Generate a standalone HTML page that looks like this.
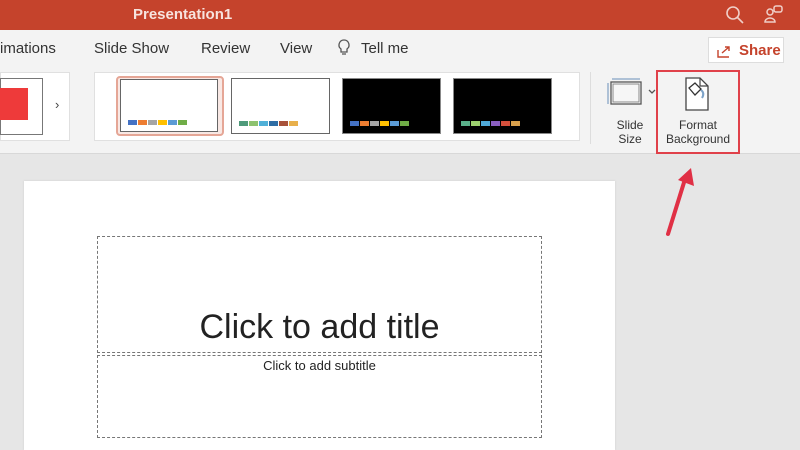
<!DOCTYPE html>
<html><head><style>
body{margin:0;width:800px;height:450px;overflow:hidden;background:#e6e6e6;font-family:"Liberation Sans",sans-serif;position:relative}
.a{position:absolute}
.sw{display:inline-block;width:9px;height:5px;margin-right:1px}
</style></head><body>
<div class="a" style="left:0;top:0;width:800px;height:30px;background:#c5432c"></div>
<div class="a" style="left:133px;top:6px;color:#f7e3de;font-weight:bold;font-size:15px">Presentation1</div>
<svg class="a" style="left:724px;top:4px" width="22" height="22"><circle cx="9" cy="9" r="6" fill="none" stroke="#f0cfc8" stroke-width="1.6"/><line x1="13" y1="13" x2="19" y2="19" stroke="#f0cfc8" stroke-width="1.6"/></svg>
<svg class="a" style="left:762px;top:3px" width="24" height="24"><circle cx="8" cy="9" r="3" fill="none" stroke="#f0cfc8" stroke-width="1.5"/><path d="M3 19 a5 4 0 0 1 10 0 Z" fill="none" stroke="#f0cfc8" stroke-width="1.5"/><rect x="12" y="3" width="8" height="6" rx="2" fill="none" stroke="#f0cfc8" stroke-width="1.5"/></svg>
<div class="a" style="left:0;top:30px;width:800px;height:123px;background:#f3f3f3;border-bottom:1px solid #d8d8d8"></div>
<div class="a" style="top:40px;left:0;font-size:15px;color:#333;white-space:nowrap"><span style="margin-left:0">imations</span><span style="position:absolute;left:94px">Slide Show</span><span style="position:absolute;left:201px">Review</span><span style="position:absolute;left:280px">View</span><span style="position:absolute;left:361px">Tell me</span></div>
<svg class="a" style="left:336px;top:38px" width="16" height="20"><path d="M8 2a5 5 0 0 0-3 9v3h6v-3a5 5 0 0 0-3-9zM6 16h4" fill="none" stroke="#555" stroke-width="1.3"/></svg>
<div class="a" style="left:708px;top:37px;width:76px;height:26px;background:#fff;border:1px solid #ddd;color:#c5432c;font-weight:bold;font-size:15px;line-height:26px;box-sizing:border-box;padding-left:30px">Share</div>
<svg class="a" style="left:716px;top:43px" width="16" height="16"><path d="M2 7v7h11M6 10l7-6M9 4h4v4" fill="none" stroke="#c5432c" stroke-width="1.4"/></svg>
<div class="a" style="left:0;top:72px;width:68px;height:67px;background:#fff;border:1px solid #e0e0e0"></div>
<div class="a" style="left:0;top:78px;width:41px;height:55px;border:1px solid #777;background:#fff"></div>
<div class="a" style="left:0;top:88px;width:28px;height:32px;background:#ee3a3a"></div>
<div class="a" style="left:55px;top:97px;font-size:13px;color:#444">›</div>
<div class="a" style="left:94px;top:72px;width:484px;height:67px;background:#fff;border:1px solid #e0e0e0"></div>
<div class="a" style="left:116px;top:76px;width:108px;height:60px;border:2px solid #e5a696;border-radius:4px;background:#f8e8e4;box-sizing:border-box"></div>
<div class="a" style="left:120px;top:79px;width:98px;height:53px;border:1px solid #666;background:#fff;box-sizing:border-box"><div style="position:absolute;left:7px;top:40px;white-space:nowrap;font-size:0"><span class="sw" style="background:#4472c4"></span><span class="sw" style="background:#ed7d31"></span><span class="sw" style="background:#a5a5a5"></span><span class="sw" style="background:#ffc000"></span><span class="sw" style="background:#5b9bd5"></span><span class="sw" style="background:#70ad47"></span></div></div>
<div class="a" style="left:231px;top:78px;width:99px;height:56px;border:1px solid #666;background:#fff;box-sizing:border-box"><div style="position:absolute;left:7px;top:42px;white-space:nowrap;font-size:0"><span class="sw" style="background:#4e9a7a"></span><span class="sw" style="background:#8dc26f"></span><span class="sw" style="background:#4fb0d8"></span><span class="sw" style="background:#2e6da4"></span><span class="sw" style="background:#a8523a"></span><span class="sw" style="background:#e8b04c"></span></div></div>
<div class="a" style="left:342px;top:78px;width:99px;height:56px;border:1px solid #888;background:#000;box-sizing:border-box"><div style="position:absolute;left:7px;top:42px;white-space:nowrap;font-size:0"><span class="sw" style="background:#4472c4"></span><span class="sw" style="background:#ed7d31"></span><span class="sw" style="background:#a5a5a5"></span><span class="sw" style="background:#ffc000"></span><span class="sw" style="background:#5b9bd5"></span><span class="sw" style="background:#70ad47"></span></div></div>
<div class="a" style="left:453px;top:78px;width:99px;height:56px;border:1px solid #888;background:#000;box-sizing:border-box"><div style="position:absolute;left:7px;top:42px;white-space:nowrap;font-size:0"><span class="sw" style="background:#5ab08a"></span><span class="sw" style="background:#9ccf6e"></span><span class="sw" style="background:#4fa9d8"></span><span class="sw" style="background:#8a5ec0"></span><span class="sw" style="background:#d4503c"></span><span class="sw" style="background:#d9a04c"></span></div></div>
<div class="a" style="left:590px;top:72px;width:1px;height:72px;background:#ddd"></div>
<svg class="a" style="left:605px;top:77px" width="56" height="32"><rect x="6" y="5" width="30" height="22" fill="#fff" stroke="#555" stroke-width="1.3"/><rect x="8" y="7" width="26" height="18" fill="#f6f6f6" stroke="#888"/><path d="M3 6v21M7 2h28" stroke="#6a8fb8"/><path d="M44 13l3 3 3-3" fill="none" stroke="#555" stroke-width="1.3"/></svg>
<div class="a" style="left:605px;top:118px;width:50px;text-align:center;font-size:12px;line-height:14px;color:#333">Slide<br>Size</div>
<div class="a" style="left:656px;top:70px;width:84px;height:84px;border:2px solid #e0414a;box-sizing:border-box"></div>
<svg class="a" style="left:680px;top:76px" width="34" height="36"><path d="M6 2h14l8 8v24H6z" fill="#fff" stroke="#444" stroke-width="1.3"/><path d="M20 2v8h8" fill="none" stroke="#444" stroke-width="1.2"/><path d="M9 12l6-5 6 6-6 6z" fill="#fff" stroke="#333" stroke-width="1.3"/><path d="M21 14q4 3 1 8" stroke="#7da3c9" stroke-width="2" fill="none"/></svg>
<div class="a" style="left:656px;top:118px;width:84px;text-align:center;font-size:12px;line-height:14px;color:#333">Format<br>Background</div>
<svg class="a" style="left:660px;top:162px" width="40" height="78"><path d="M8 72L26 14" stroke="#e03045" stroke-width="4" stroke-linecap="round"/><path d="M18 18L31 6 34 24z" fill="#e03045"/></svg>
<div class="a" style="left:24px;top:181px;width:591px;height:269px;background:#fff;box-shadow:0 0 2px #ccc"></div>
<div class="a" style="left:97px;top:236px;width:445px;height:117px;border:1px dashed #777;box-sizing:border-box"></div>
<div class="a" style="left:97px;top:355px;width:445px;height:83px;border:1px dashed #777;box-sizing:border-box"></div>
<div class="a" style="left:97px;top:308px;width:445px;text-align:center;font-size:34px;color:#222">Click to add title</div>
<div class="a" style="left:97px;top:358px;width:445px;text-align:center;font-size:13px;color:#222">Click to add subtitle</div>
</body></html>
